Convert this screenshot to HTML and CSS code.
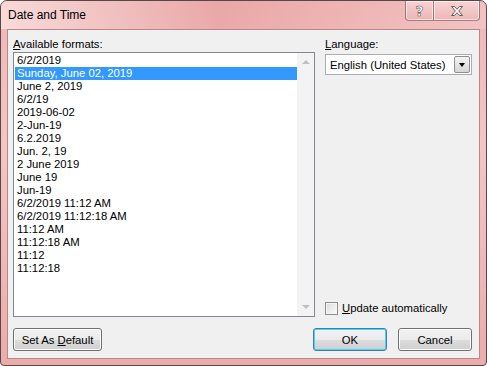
FILE: index.html
```html
<!DOCTYPE html>
<html>
<head>
    <meta charset="UTF-8">
    <title>Date and Time</title>
    <link rel="stylesheet" href="styles.css">
</head>
<body>
    <div class="window">
        <div class="titlebar">
            <span class="title">Date and Time</span>
            <div class="caption-buttons">
                <button class="cap cap-help">?</button>
                <button class="cap cap-close">
                    <svg width="14" height="12" viewBox="0 0 14 12">
                        <path d="M1.5 1.5 L4.5 1.5 L7 4.3 L9.5 1.5 L12.5 1.5 L8.7 6 L12.5 10.5 L9.5 10.5 L7 7.7 L4.5 10.5 L1.5 10.5 L5.3 6 Z" fill="#ffffff" stroke="#6b5a5a" stroke-width="1"/>
                    </svg>
                </button>
            </div>
        </div>

        <div class="client">
            <div class="main">
                <div class="formats">
                    <div class="label"><u>A</u>vailable formats:</div>
                    <div class="listbox">
                        <ul class="items">
                            <li>6/2/2019</li>
                            <li class="selected">Sunday, June 02, 2019</li>
                            <li>June 2, 2019</li>
                            <li>6/2/19</li>
                            <li>2019-06-02</li>
                            <li>2-Jun-19</li>
                            <li>6.2.2019</li>
                            <li>Jun. 2, 19</li>
                            <li>2 June 2019</li>
                            <li>June 19</li>
                            <li>Jun-19</li>
                            <li>6/2/2019 11:12 AM</li>
                            <li>6/2/2019 11:12:18 AM</li>
                            <li>11:12 AM</li>
                            <li>11:12:18 AM</li>
                            <li>11:12</li>
                            <li>11:12:18</li>
                        </ul>
                        <div class="scrollbar">
                            <span class="arrow arrow-up"></span>
                            <span class="arrow arrow-down"></span>
                        </div>
                    </div>
                </div>

                <div class="side">
                    <div class="label"><u>L</u>anguage:</div>
                    <div class="combo">
                        <span class="combo-text">English (United States)</span>
                        <span class="combo-button"><span class="combo-arrow"></span></span>
                    </div>
                    <div class="check">
                        <span class="check-box"></span>
                        <span><u>U</u>pdate automatically</span>
                    </div>
                </div>
            </div>

            <div class="footer">
                <button class="btn btn-wide">Set As <u>D</u>efault</button>
                <div class="footer-right">
                    <button class="btn btn-default">OK</button>
                    <button class="btn">Cancel</button>
                </div>
            </div>
        </div>
    </div>
</body>
</html>
```

FILE: styles.css
```css
body {
    margin: 0;
    width: 487px;
    height: 366px;
    font-family: "Liberation Sans", Arial, sans-serif;
    font-size: 11.3px;
    color: #000;
    background: #fff;
}

.window {
    box-sizing: border-box;
    width: 487px;
    height: 366px;
    border: 1px solid #5a4646;
    border-radius: 7px 7px 4px 4px;
    background: linear-gradient(to bottom, #eeb6b6 0%, #f3c6c6 40%, #ebacac 100%);
    display: flex;
    flex-direction: column;
    overflow: hidden;
}

.titlebar {
    height: 28px;
    display: flex;
    justify-content: space-between;
    align-items: flex-start;
    padding: 0 6px 0 7px;
    background: linear-gradient(to right, rgba(255, 240, 240, 0.6) 0%, rgba(225, 140, 140, 0.35) 45%, rgba(255, 225, 225, 0.25) 100%);
}

.title {
    margin-top: 7px;
    font-size: 12px;
    line-height: 14px;
}

.caption-buttons {
    display: flex;
}

.cap {
    height: 20px;
    margin: 0;
    padding: 0;
    border: 1px solid rgba(90, 60, 60, 0.55);
    border-top: none;
    box-shadow: inset 0 0 0 1px rgba(255, 255, 255, 0.55);
    background: linear-gradient(to bottom, rgba(255, 235, 235, 0.5), rgba(230, 170, 170, 0.4));
    display: flex;
    align-items: center;
    justify-content: center;
}

.cap-help {
    width: 28px;
    border-radius: 0 0 0 4px;
    border-right: none;
    font-family: "DejaVu Sans", sans-serif;
    font-size: 14px;
    font-weight: bold;
    color: #fff;
    -webkit-text-stroke: 0.6px #6b5a5a;
}

.cap-close {
    width: 47px;
    border-radius: 0 0 4px 0;
}

.client {
    flex: 1;
    margin: 0 6px 6px 6px;
    border: 1px solid #b88888;
    background: #f0f0f0;
    padding: 7px 7px 7px 5px;
    display: flex;
    flex-direction: column;
}

.main {
    display: flex;
    gap: 10px;
}

.label {
    line-height: 15px;
}

.formats {
    width: 302px;
}

.listbox {
    height: 263px;
    border: 1px solid #828790;
    background: #fff;
    display: flex;
}

.items {
    flex: 1;
    list-style: none;
    margin: 0;
    padding: 1px 0 0 1px;
}

.items li {
    line-height: 13px;
    height: 13px;
    padding-left: 2px;
    white-space: nowrap;
}

.items .selected {
    background: #3399ff;
    color: #fff;
}

.scrollbar {
    width: 17px;
    background: #f3f3f3;
    display: flex;
    flex-direction: column;
    justify-content: space-between;
    align-items: center;
    padding: 7px 0;
}

.arrow {
    width: 0;
    height: 0;
    border-left: 4px solid transparent;
    border-right: 4px solid transparent;
}

.arrow-up {
    border-bottom: 4px solid #bfbfbf;
}

.arrow-down {
    border-top: 4px solid #bfbfbf;
}

.side {
    flex: 1;
    display: flex;
    flex-direction: column;
}

.combo {
    margin-top: 2px;
    height: 19px;
    border: 1px solid #abadb3;
    background: #fff;
    display: flex;
    align-items: center;
    padding-left: 4px;
    padding-right: 1px;
}

.combo-text {
    flex: 1;
    white-space: nowrap;
}

.combo-button {
    box-sizing: border-box;
    width: 16px;
    height: 17px;
    border: 1px solid #8f8f8f;
    border-radius: 2px;
    background: linear-gradient(to bottom, #f4f4f4, #d6d6d6);
    display: flex;
    align-items: center;
    justify-content: center;
}

.combo-arrow {
    width: 0;
    height: 0;
    border-left: 3px solid transparent;
    border-right: 3px solid transparent;
    border-top: 4px solid #000;
}

.check {
    margin-top: auto;
    margin-bottom: 1px;
    display: flex;
    align-items: center;
    gap: 4px;
    line-height: 15px;
}

.check-box {
    box-sizing: border-box;
    width: 13px;
    height: 13px;
    border: 1px solid #8e8f8f;
    background: linear-gradient(135deg, #dcdcdc, #fbfbfb);
    box-shadow: inset 0 0 0 1px #f4f4f4;
}

.footer {
    margin-top: auto;
    display: flex;
    justify-content: space-between;
}

.footer-right {
    display: flex;
    gap: 11px;
}

.btn {
    box-sizing: border-box;
    width: 74px;
    height: 23px;
    margin: 0;
    padding: 0;
    font-family: inherit;
    font-size: 11.3px;
    color: #000;
    border: 1px solid #707070;
    border-radius: 3px;
    background: linear-gradient(to bottom, #f2f2f2 0%, #ebebeb 50%, #dddddd 51%, #cfcfcf 100%);
    box-shadow: inset 0 0 0 1px #fcfcfc;
}

.btn-wide {
    width: 89px;
}

.btn-default {
    border-color: #3c7fb1;
    box-shadow: inset 0 0 0 1px #48d1f9;
}
```
